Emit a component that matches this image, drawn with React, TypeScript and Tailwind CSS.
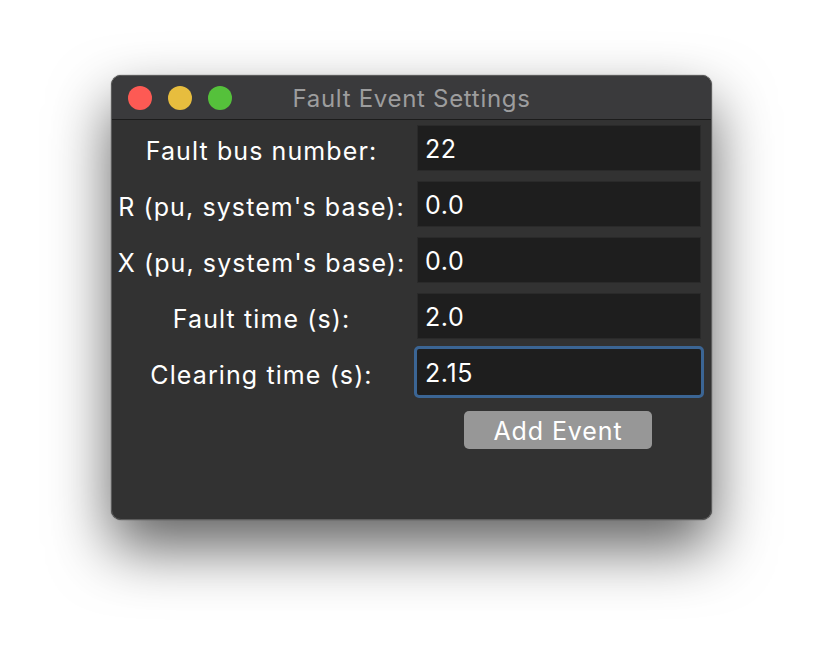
import React from "react";

const rows = [
  { label: "Fault bus number:", value: "22" },
  { label: "R (pu, system's base):", value: "0.0" },
  { label: "X (pu, system's base):", value: "0.0" },
  { label: "Fault time (s):", value: "2.0" },
  { label: "Clearing time (s):", value: "2.15", focused: true },
];

export default function App() {
  return (
    <div
      className="w-[824px] h-[668px] bg-white pt-[75px] pl-[111px] overflow-hidden"
      style={{ fontFamily: "Inter, 'Noto Sans', sans-serif" }}
    >
      <div className="w-[601px] h-[445px] rounded-[10px] bg-[#323232] border border-[#5c5c5c] shadow-[0_28px_60px_rgba(0,0,0,0.62),0_0_1px_rgba(0,0,0,0.9)] flex flex-col">
        <div className="h-[44px] shrink-0 bg-[#3a3a3c] rounded-t-[10px] border-b border-[#1c1c1c] flex items-center relative">
          <div className="flex gap-[16px] pl-[16px]">
            <span className="w-[24px] h-[24px] rounded-full bg-[#fd5a54]" />
            <span className="w-[24px] h-[24px] rounded-full bg-[#e7bd3e]" />
            <span className="w-[24px] h-[24px] rounded-full bg-[#55c13b]" />
          </div>
          <div className="absolute inset-0 flex items-center justify-center pt-[2px] text-[24px] tracking-[0.7px] text-[#9d9d9e] pointer-events-none">
            Fault Event Settings
          </div>
        </div>
        <div className="flex flex-col pt-[5px] gap-[10px]">
          {rows.map((r) => (
            <div key={r.label} className="flex items-center h-[46px]">
              <div className="w-[305px] pr-[6px] text-center text-[25px] tracking-[1.1px] text-white pt-[7px] whitespace-nowrap">
                {r.label}
              </div>
              <div
                className={
                  r.focused
                    ? "w-[284px] h-[46px] bg-[#1e1e1e] rounded-[2px] outline-[3px] outline-solid outline-[#3b6594] flex items-center pl-[8px] pt-[3px] text-[25px] tracking-[0.6px] text-white"
                    : "w-[284px] h-[46px] bg-[#1e1e1e] border border-[#2a2a2a] flex items-center pl-[7px] pt-[3px] text-[25px] tracking-[0.6px] text-white"
                }
              >
                {r.value}
              </div>
            </div>
          ))}
          <div className="flex pl-[352px] pt-[6px]">
            <div className="w-[188px] h-[38px] rounded-[5px] bg-[#979797] text-white text-[25px] tracking-[0.9px] pt-[3px] flex items-center justify-center">
              Add Event
            </div>
          </div>
        </div>
      </div>
    </div>
  );
}
